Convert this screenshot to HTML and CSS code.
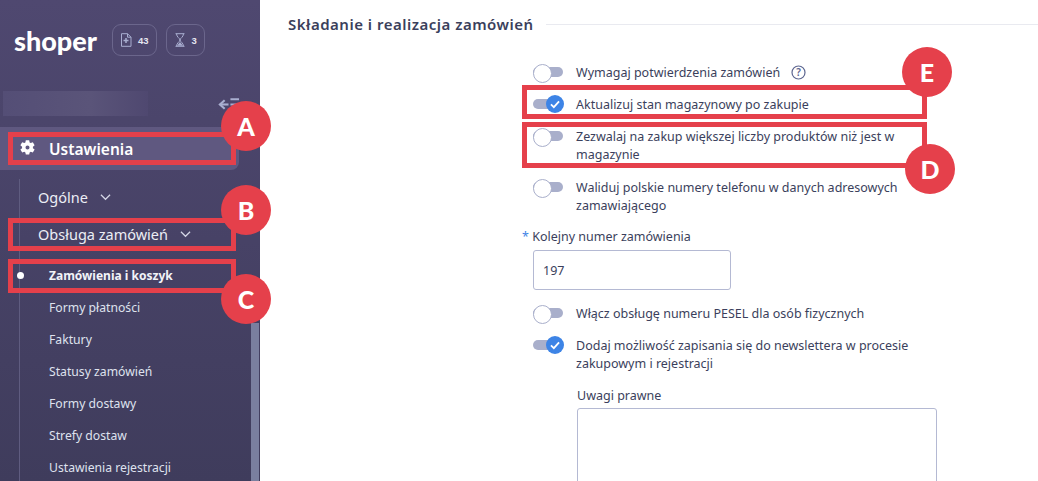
FILE: index.html
```html
<!DOCTYPE html>
<html lang="pl">
<head>
<meta charset="utf-8">
<title>Składanie i realizacja zamówień</title>
<link rel="stylesheet" href="styles.css">
</head>
<body>
<div class="app">
  <aside class="sidebar">
    <div class="brand-row">
      <span class="logo">shoper</span>
      <span class="chip">
        <svg class="chip-icon" viewBox="0 0 12 14" width="12" height="14"><path d="M1.500.7h6l3.500 3.500v9.100H1.500zM7.500.7v3.500H11" fill="none" stroke="#a9aed0" stroke-width="1"/><path d="M6 5v5M3.500 7.500h5" stroke="#a9aed0" stroke-width="1.500"/></svg>
        <span>43</span>
      </span>
      <span class="chip">
        <svg class="chip-icon" viewBox="0 0 12 14" width="12" height="14"><path d="M1.500.7h9M1.500 13.300h9M2.500.7c0 3.500 3.500 4.500 3.500 6.300S2.500 9.800 2.500 13.300M9.500.7C9.500 4.200 6 5.200 6 7s3.500 2.800 3.500 6.300" fill="none" stroke="#a9aed0" stroke-width="1"/><path d="M3 12.800 6 9l3 3.800z" fill="#a9aed0"/></svg>
        <span>3</span>
      </span>
    </div>
    <div class="shop-row">
      <div class="blurred"></div>
      <svg class="collapse" viewBox="0 0 24 14" width="23" height="14"><path d="M8 3 3 7.500 8 12" fill="none" stroke="#a9aed0" stroke-width="2.200"/><path d="M3 7.500h9" stroke="#a9aed0" stroke-width="2.200"/><path d="M14 2h9M14 7.500h9" stroke="#a9aed0" stroke-width="2"/></svg>
    </div>
    <div class="active-section">
      <svg class="gear" viewBox="0 0 16 16" width="17" height="17"><path fill-rule="evenodd" fill="#fff" d="M6.400.3h3.200l.4 2 1 .6 2-.7 1.700 2.800-1.600 1.300v1.400l1.600 1.300-1.700 2.800-2-.7-1 .6-.4 2H6.400l-.4-2-1-.6-2 .7L1.300 9.000 2.900 7.700V6.300L1.300 5 3 2.200l2 .7 1-.6zM8 5.200a1.900 1.900 0 1 0 0 3.800 1.900 1.900 0 0 0 0-3.800z"/></svg>
      <span>Ustawienia</span>
    </div>
    <nav class="tree">
      <a class="group">Ogólne <svg class="chev" viewBox="0 0 12 8" width="11" height="8"><path d="M1 1.500 6 6.500l5-5" fill="none" stroke="#d5d6e6" stroke-width="1.300"/></svg></a>
      <a class="group group-open">Obsługa zamówień <svg class="chev" viewBox="0 0 12 8" width="11" height="8"><path d="M1 1.500 6 6.500l5-5" fill="none" stroke="#d5d6e6" stroke-width="1.300"/></svg></a>
      <a class="leaf leaf-active">Zamówienia i koszyk</a>
      <a class="leaf">Formy płatności</a>
      <a class="leaf">Faktury</a>
      <a class="leaf">Statusy zamówień</a>
      <a class="leaf">Formy dostawy</a>
      <a class="leaf">Strefy dostaw</a>
      <a class="leaf">Ustawienia rejestracji</a>
    </nav>
    <div class="scrollbar"></div>
  </aside>

  <main class="content">
    <header class="section-title">
      <h2>Składanie i realizacja zamówień</h2>
      <span class="rule"></span>
    </header>
    <div class="form">
      <div class="row r1"><span class="toggle"></span><span class="label">Wymagaj potwierdzenia zamówień <svg class="help" viewBox="0 0 15 15" width="15" height="15"><circle cx="7.500" cy="7.500" r="6.500" fill="none" stroke="#5d6690" stroke-width="1.200"/><text x="7.500" y="11" text-anchor="middle" class="help-q">?</text></svg></span></div>
      <div class="row r2"><span class="toggle on"><svg viewBox="0 0 20 20"><circle cx="10" cy="10" r="10" fill="#3d84e6"/><path d="M5.500 10.500 8.700 13.500 14.500 7" fill="none" stroke="#fff" stroke-width="2"/></svg></span><span class="label">Aktualizuj stan magazynowy po zakupie</span></div>
      <div class="row r3"><span class="toggle"></span><span class="label">Zezwalaj na zakup większej liczby produktów niż jest w magazynie</span></div>
      <div class="row r4"><span class="toggle"></span><span class="label">Waliduj polskie numery telefonu w danych adresowych zamawiającego</span></div>
      <div class="field">
        <label class="field-label"><span class="req">*</span> Kolejny numer zamówienia</label>
        <input class="input" value="197">
      </div>
      <div class="row r5"><span class="toggle"></span><span class="label">Włącz obsługę numeru PESEL dla osób fizycznych</span></div>
      <div class="row r6"><span class="toggle on"><svg viewBox="0 0 20 20"><circle cx="10" cy="10" r="10" fill="#3d84e6"/><path d="M5.500 10.500 8.700 13.500 14.500 7" fill="none" stroke="#fff" stroke-width="2"/></svg></span><span class="label">Dodaj możliwość zapisania się do newslettera w procesie zakupowym i rejestracji</span></div>
      <div class="notes">
        <label class="notes-label">Uwagi prawne</label>
        <div class="textarea"></div>
      </div>
    </div>
  </main>

  <div class="mark box-a"></div>
  <div class="mark box-b"></div>
  <div class="mark box-c"></div>
  <div class="mark box-d"></div>
  <div class="mark box-e"></div>
  <div class="badge badge-a">A</div>
  <div class="badge badge-b">B</div>
  <div class="badge badge-c">C</div>
  <div class="badge badge-d">D</div>
  <div class="badge badge-e">E</div>
</div>
</body>
</html>
```

FILE: styles.css
```css
* { box-sizing: border-box; }
html, body { margin: 0; height: 100%; background: #fff; overflow: hidden; }
body { font-family: "Noto Sans", "Open Sans", sans-serif; color: #3b3f5c; }
.app { position: relative; display: flex; width: 1038px; height: 481px; overflow: hidden; }

.sidebar { position: relative; flex: 0 0 260px; height: 481px; overflow: hidden; color: #fff;
  background: linear-gradient(180deg, #4f4870 0%, #3f3c5c 100%); }
.brand-row { display: flex; align-items: center; height: 80px; padding-left: 14px; }
.logo { font-family: "Lato", sans-serif; font-weight: 900; font-size: 27px; color: #fff; width: 98px; line-height: 1; }
.chip { display: inline-flex; align-items: center; gap: 6px; height: 32px; padding: 0 7px; margin-right: 9px;
  border: 1px solid #6b668c; border-radius: 9px; font-family: "Liberation Sans", sans-serif; font-size: 9.500px; font-weight: 700; color: #e6e6f0; }
.chip-icon { display: block; }
.shop-row { display: flex; align-items: center; justify-content: space-between; height: 47px; padding: 0 20px 0 3px; }
.blurred { width: 145px; height: 25px;
  background: linear-gradient(90deg, #544e76 0%, #5a5479 60%, #4f4870 100%); }
.collapse { display: block; }
.active-section { display: flex; align-items: center; gap: 13px; width: 239px; height: 43px; padding: 0 0 0 19px;
  background: #5f5880; border-radius: 0 0 8px 0; font-weight: 600; font-size: 15.500px; color: #fff; }
.gear { flex: none; }
.tree { position: relative; margin-top: 9px; margin-left: 19px; border-left: 1px solid #5f5c80; height: 310px; }
.group { display: flex; align-items: center; gap: 12px; height: 35px; padding-left: 18px; font-size: 14.500px; color: #eceef5; }
.group-open { height: 40px; }
.leaf { display: block; height: 32px; line-height: 32px; padding-left: 29px; font-size: 12.200px; color: #dfe2ee; }
.leaf-active { position: relative; font-weight: 700; font-size: 12px; color: #f2f3f8; margin-top: 6px; }
.leaf-active::before { content: ""; position: absolute; left: -3px; top: 12px; width: 7px; height: 7px; border-radius: 50%; background: #fff; }
.scrollbar { position: absolute; right: 1px; top: 323px; bottom: 0; width: 8px; background: #7a7f9f; }

.content { flex: 1; min-width: 0; }
.section-title { display: flex; align-items: center; gap: 12px; height: 48px; padding-left: 28px; }
.section-title h2 { margin: 0; font-size: 15px; letter-spacing: .5px; font-weight: 600; color: #3b3f5c; }
.rule { flex: 1; height: 1px; background: #e9eaf0; }
.form { padding-left: 273px; width: 690px; }
.row { display: flex; align-items: flex-start; gap: 13px; font-size: 12.500px; line-height: 18px; }
.label { width: 360px; margin-top: 1px; margin-bottom: -1px; }
.r1 { margin-top: 15px; }
.r2 { margin-top: 14px; }
.r3 { margin-top: 14px; }
.r4 { margin-top: 15px; }
.r5 { margin-top: 14px; }
.r6 { margin-top: 14px; }
.toggle { position: relative; flex: none; width: 30px; height: 18px; }
.toggle::before { content: ""; position: absolute; left: 0; right: 0; top: 4px; height: 10px; border-radius: 5px; background: #a9afcb; }
.toggle::after { content: ""; position: absolute; left: 0; top: 1px; width: 17px; height: 17px; border-radius: 50%; background: #fff; border: 1px solid #a9afcb; }
.toggle.on::after { display: none; }
.toggle svg { position: absolute; left: 13px; top: 0; width: 18px; height: 18px; }
.help { vertical-align: -3px; margin-left: 8px; }
.help-q { font-size: 10px; font-weight: 600; fill: #5d6690; }
.field { margin-top: 14px; margin-left: -11px; }
.field-label { display: block; font-size: 12.500px; line-height: 18px; }
.req { color: #3d84e6; }
.input { display: block; margin: 4px 0 0 11px; width: 198px; height: 40px; padding: 0 9px; border: 1px solid #b4b9d3; border-radius: 3px;
  font: 12.500px "Noto Sans", sans-serif; color: #3b3f5c; background: #fff; }
.notes { margin-left: 44px; margin-top: 15px; }
.notes-label { display: block; font-size: 12.500px; line-height: 18px; }
.textarea { margin-top: 3px; width: 360px; height: 120px; border: 1px solid #b4b9d3; border-radius: 3px; }

.mark { position: absolute; border: 5px solid #e5404b; }
.box-a { left: 8px; top: 132px; width: 228px; height: 33px; }
.box-b { left: 8px; top: 218px; width: 228px; height: 33px; }
.box-c { left: 8px; top: 259px; width: 228px; height: 34px; }
.box-d { left: 522px; top: 122px; width: 405px; height: 46px; }
.box-e { left: 522px; top: 85px; width: 405px; height: 34px; }
.badge { position: absolute; width: 50px; height: 50px; border-radius: 50%; background: #e5404b; color: #fff;
  display: flex; align-items: center; justify-content: center; font-family: "Lato", sans-serif; font-weight: 900; font-size: 25px; }
.badge-a { left: 221px; top: 101px; }
.badge-b { left: 221px; top: 185px; }
.badge-c { left: 221px; top: 274px; }
.badge-d { left: 905px; top: 144px; }
.badge-e { left: 902px; top: 47px; }
```
